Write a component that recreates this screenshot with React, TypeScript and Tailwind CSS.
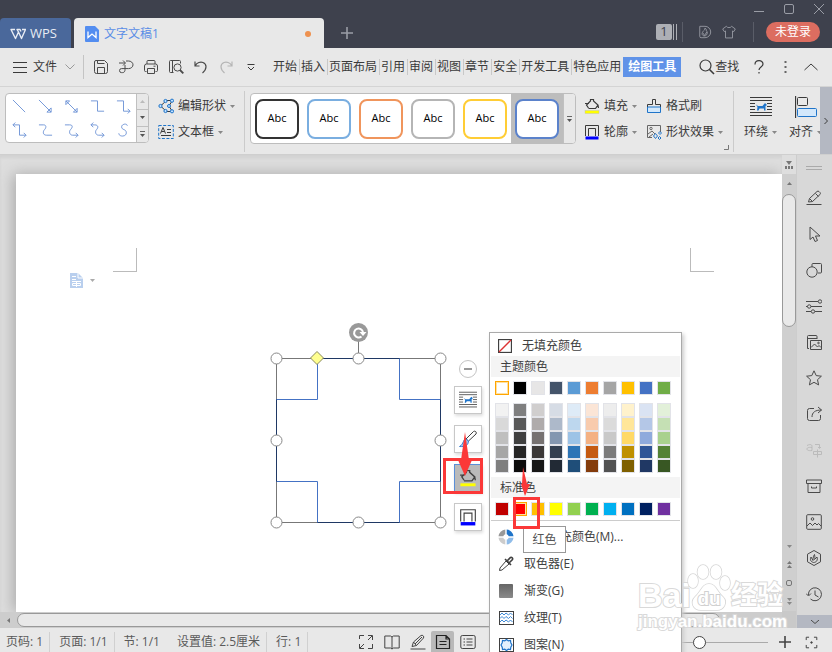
import type { ReactNode } from "react";
import clsx from "clsx";

type IconProps = { children: ReactNode; className?: string; box?: string };

function Icon({ children, className = "size-4", box = "0 0 16 16" }: IconProps) {
  return (
    <svg aria-hidden="true" viewBox={box} className={clsx("shrink-0", className)} fill="none" stroke="currentColor" strokeWidth="1">
      {children}
    </svg>
  );
}

function Caret({ className = "text-[#888]" }: { className?: string }) {
  return (
    <svg aria-hidden="true" viewBox="0 0 5 3" className={clsx("h-[3px] w-[5px] shrink-0", className)} fill="currentColor">
      <path d="M0 0h5L2.5 3z" />
    </svg>
  );
}

const quickActions = [
  { label: "保存", icon: <path d="M3 1.5h8.5l3 3v8a2 2 0 0 1-2 2h-9a2 2 0 0 1-2-2V3A1.5 1.5 0 0 1 3 1.5ZM4.5 1.5v3h7M4.5 14.500V8.500h7v6" /> },
  { label: "输出为PDF", icon: <path d="M1 4h6M5 1.500 7.500 4 5 6.500M8 2h2.500a4.500 3.800 0 0 1 0 7.600H3.500a1.900 1.900 0 0 0 0 4h1c2 0 2.500-1.500 2.500-3V6" /> },
  { label: "打印", icon: <path d="M4 5V2.500A1 1 0 0 1 5 1.500h6a1 1 0 0 1 1 1V5M3.500 12.500h-1a1 1 0 0 1-1-1V7a2 2 0 0 1 2-2h9a2 2 0 0 1 2 2v4.500a1 1 0 0 1-1 1h-1M4.500 9.500h7v5h-7zM10.500 7.200h2" /> },
  { label: "打印预览", icon: <><path d="M5.500 13.500H2.500a1 1 0 0 1-1-1v-10a1 1 0 0 1 1-1h9a1 1 0 0 1 1 1v2M4.500 1.500v12" /><circle cx="9.500" cy="8.500" r="3.600" /><path d="m12 11 3.300 3.300" strokeWidth="1.800" /></> },
  { label: "撤销", icon: <path d="M2 2.500v4.500h4.500M2.300 6.700C4 3.500 7.500 2.500 10 3.500c4 1.600 4.200 6.500-.5 10.500" strokeWidth="1.200" /> },
  { label: "恢复", dim: true, icon: <path d="M14 2.500v4.500H9.500M13.700 6.700C12 3.500 8.500 2.500 6 3.500c-4 1.600-4.200 6.500.5 10.500" strokeWidth="1.200" /> },
];

const menuTabs = ["开始", "插入", "页面布局", "引用", "审阅", "视图", "章节", "安全", "开发工具"];

const connectors = [
  "M1 1l13 13",
  "M1 1l13 13M14 9.500V14H9.500z",
  "M2 2l12 12M14 10v4h-4zM2 6V2h4z",
  "M1 2h7v11h7",
  "M1 2h7v11h7M12.500 10.500 15 13l-2.500 2.500",
  "M1 2h7v11h7M12.500 10.500 15 13l-2.500 2.500M3.500-.5 1 2l2.500 2.500",
  "M1 2h5c3 0 3 3 1 5s-2 6 2 6h6",
  "M1 2h5c4 0 3 3 1 5s-1 6 2 6h6M12.500 10.500 15 13l-2.500 2.500",
  "M1 2h4c4 0 4 3 2 5s-1 6 2 6h6M12.500 10.500 15 13l-2.500 2.500M3.500-.5 1 2l2.500 2.500",
  "M12 3c0-3-6-2-6 1 0 4 5 2 5 6.500 0 4.500-8 4.500-8 .5",
];

const outlineStyles = [
  { name: "黑色", box: "border-[#333]" },
  { name: "浅蓝", box: "border-[#7aaee0]" },
  { name: "橙色", box: "border-[#f0955c]" },
  { name: "灰色", box: "border-[#b5b5b5]" },
  { name: "金色", box: "border-[#ffcd35]" },
  { name: "蓝色", box: "border-[#5b82cb]", selected: true },
];

const themeColors = ["#ffffff", "#000000", "#e7e6e6", "#44546a", "#5b9bd5", "#ed7d31", "#a5a5a5", "#ffc000", "#4472c4", "#70ad47"];
const shades = [
  ["#f2f2f2", "#7f7f7f", "#d0cece", "#d6dce5", "#deebf7", "#fbe5d6", "#ededed", "#fff2cc", "#dae3f3", "#e2f0d9"],
  ["#d9d9d9", "#595959", "#afabab", "#adb9ca", "#bdd7ee", "#f8cbad", "#dbdbdb", "#ffe699", "#b4c7e7", "#c5e0b4"],
  ["#bfbfbf", "#404040", "#767171", "#8497b0", "#9dc3e6", "#f4b183", "#c9c9c9", "#ffd966", "#8faadc", "#a9d18e"],
  ["#a6a6a6", "#262626", "#3b3838", "#333f50", "#2e75b6", "#c55a11", "#7b7b7b", "#bf9000", "#2f5597", "#548235"],
  ["#7f7f7f", "#0d0d0d", "#171717", "#222a35", "#1f4e79", "#843c0c", "#525252", "#7f6000", "#203864", "#385723"],
];
const standardColors = ["#c00000", "#ff0000", "#ffc000", "#ffff00", "#92d050", "#00b050", "#00b0f0", "#0070c0", "#002060", "#7030a0"];

function Swatches({ colors, selected }: { colors: string[]; selected?: number }) {
  return (
    <div className="flex gap-1 px-[5px]">
      {colors.map((color, i) => (
        <button
          key={i}
          type="button"
          aria-label={color}
          className={clsx("size-[14px] border", i === selected ? "border-[#ffa500] shadow-[inset_0_0_0_1px_#ffe0a0]" : "border-[#e2e3e8]")}
          style={{ backgroundColor: color }}
        />
      ))}
    </div>
  );
}

function FillIcon({ className = "size-4" }: { className?: string }) {
  return (
    <Icon className={className}>
      <path d="M4.500 10 2.500 7 6.500 3V1.500h3V3L14 7l-2.500 3.500h-7M1 5.500h4M14 7l.5 3" strokeWidth="1.200" />
      <rect x="1" y="12.500" width="14" height="3" fill="#ff0" stroke="#bbb" strokeWidth=".4" />
    </Icon>
  );
}

function OutlineIcon({ className = "size-4" }: { className?: string }) {
  return (
    <Icon className={className}>
      <path d="M1.500 12V1.500h13V12M4.500 12V4.500h7V12" />
      <rect x="1.500" y="12.500" width="13" height="3" fill="#00f" stroke="none" />
    </Icon>
  );
}

function WrapIcon({ className }: { className: string }) {
  return (
    <Icon className={className} box="0 0 22 22">
      <path d="M0 1.500h22M0 4.500h22M0 7.500h5M17 7.500h5M0 10.500h5M17 10.500h5M0 13.500h5M17 13.500h5M0 16.500h22M0 19.500h22" />
      <path d="m6 8.500 2 1.500h4.500L15 7l2 2-1.500 1v4.500H14V12.500H9.500L8.500 14.500H7L7.500 11z" fill="#1f74c9" stroke="none" />
    </Icon>
  );
}

function TitleBar() {
  return (
    <header className="flex h-12 shrink-0 items-end bg-[#3e414d] text-[#9a9da6]">
      <button type="button" className="flex h-[30px] w-[71px] items-center gap-1 rounded-t bg-[#4a689b] pt-[2px] pl-[10px] text-[13px] text-[#e8ecf4]">
        <Icon className="h-3 w-4" box="0 0 16 12">
          <path d="M5 1.500H1l4.500 9 3-6.500L7 1.500h3l1 2M8.500 4l3 6.500 4-9H12" strokeWidth="1.400" strokeLinejoin="round" />
        </Icon>
        WPS
      </button>
      <div className="ml-[3px] flex h-[30px] w-[250px] items-center gap-[5px] rounded-t bg-[#e8e8e8] pt-[2px] pr-[13px] pl-[11px] text-[#5a8de6]">
        <svg aria-hidden="true" viewBox="0 0 14 16" className="h-4 w-[14px]">
          <path d="M1 0h9l4 4v11a1 1 0 0 1-1 1H1a1 1 0 0 1-1-1V1a1 1 0 0 1 1-1Z" fill="#538df0" />
          <path d="M3 5.500v6l4-3.500 4 3.500v-6" fill="none" stroke="#fff" strokeWidth="1.300" />
        </svg>
        <span className="grow">文字文稿1</span>
        <span className="size-[6px] rounded-full bg-[#ee914f]" />
      </div>
      <button type="button" aria-label="新建" className="flex h-[30px] w-[46px] items-center justify-center">
        <Icon className="size-3" box="0 0 12 12"><path d="M6 0v12M0 6h12" strokeWidth="1.600" /></Icon>
      </button>
      <div className="ml-auto flex flex-col items-end pb-[6px]">
        <div className="mb-1 flex h-[18px] items-center gap-5 pr-2">
          <button type="button" aria-label="最小化"><Icon className="size-[10px]" box="0 0 10 10"><path d="M0 7.500h10" /></Icon></button>
          <button type="button" aria-label="最大化"><Icon className="size-[10px]" box="0 0 10 10"><rect x=".5" y=".5" width="9" height="9" rx="1.500" /></Icon></button>
          <button type="button" aria-label="关闭"><Icon className="size-[10px]" box="0 0 10 10"><path d="m0 0 10 10M10 0 0 10" /></Icon></button>
        </div>
        <div className="flex h-5 items-center pr-3">
          <span className="flex size-4 items-center justify-center rounded-xs bg-[#adafb5] text-[13px] text-[#3e414d]">1</span>
          <span className="ml-px flex h-4 w-1 border-x border-[#adafb5]" />
          <span className="ml-[5px] h-5 w-px bg-[#5a5d68]" />
          <button type="button" aria-label="稻壳" className="ml-[15px]">
            <Icon className="size-[14px]"><path d="M2 1.500h6a6.500 6.500 0 0 1 0 13H3.500a1.500 1.500 0 0 1-1.500-1.500zM8 3.500c3 2 0 3 2.500 4 .5 3-1 5-3 5-3 0-4-3-1-6 1.500-1 1-2 1.500-3ZM5.500 9l2 3 2.500-4" /></Icon>
          </button>
          <button type="button" aria-label="皮肤" className="ml-[10px]">
            <Icon className="size-[14px]"><path d="m5 1.500-4.200 3 1.700 3 1.500-.7v8h8v-8l1.500.7 1.700-3-4.200-3c-1 2-5 2-6 0Z" /></Icon>
          </button>
          <span className="ml-[17px] h-5 w-px bg-[#5a5d68]" />
          <button type="button" className="ml-3 h-5 w-[54px] rounded-full bg-[#dc6d60] text-white">未登录</button>
        </div>
      </div>
    </header>
  );
}

function MenuBar() {
  return (
    <nav className="flex h-[39px] shrink-0 items-center border-b border-[#d4d4d4] text-[#3a3a3a]">
      <button type="button" className="flex items-center gap-[6px] pl-[13px]">
        <Icon className="h-[11px] w-[14px]" box="0 0 14 11"><path d="M0 .5h14M0 5.500h14M0 10.500h14" /></Icon>
        文件
        <Icon className="ml-[2px] h-[6px] w-[10px] text-[#999]" box="0 0 10 6"><path d="m.5.5 4.500 4.500L9.500.5" /></Icon>
      </button>
      <span className="mr-1 ml-2 h-6 w-px bg-[#c4c4c4]" />
      {quickActions.map((a) => (
        <button key={a.label} type="button" aria-label={a.label} className={clsx("flex w-[25px] justify-center", a.dim ? "text-[#b5b5b5]" : "text-[#4a4a4a]")}>
          <Icon>{a.icon}</Icon>
        </button>
      ))}
      <button type="button" aria-label="自定义" className="flex w-[25px] justify-center">
        <Icon className="h-[7px] w-2" box="0 0 8 7"><path d="M.5.5h7M1 3l3 3 3-3" /></Icon>
      </button>
      <div className="ml-[9px] flex items-center">
        {menuTabs.map((tab) => (
          <button key={tab} type="button" className="border-r border-[#c8c8c8] pr-[2px] pl-px whitespace-nowrap">{tab}</button>
        ))}
        <button type="button" className="pr-[2px] pl-px whitespace-nowrap">特色应用</button>
        <button type="button" className="h-5 w-[58px] bg-[#6093e8] font-bold whitespace-nowrap text-white">绘图工具</button>
      </div>
      <button type="button" className="ml-[18px] flex items-center whitespace-nowrap">
        <Icon><circle cx="6.500" cy="6.500" r="5.500" strokeWidth="1.200" /><path d="m10.500 10.500 4.500 4.500" strokeWidth="1.600" /></Icon>
        查找
      </button>
      <div className="ml-auto flex items-center pr-[14px]">
        <button type="button" aria-label="帮助"><Icon className="h-[14px] w-[10px]" box="0 0 10 14"><path d="M1 4.500c0-5 8-5 8-.5 0 3-4 3-4 6M5 12v1.500" strokeWidth="1.200" /></Icon></button>
        <button type="button" aria-label="更多" className="ml-5"><Icon className="h-3 w-[3px] text-[#666]" box="0 0 3 12"><path d="M1.500 0v2M1.500 5v2M1.500 10v2" strokeWidth="2" /></Icon></button>
        <button type="button" aria-label="收起功能区" className="ml-[17px]"><Icon className="h-2 w-[14px]" box="0 0 14 8"><path d="m.5 7 6.500-6 6.500 6" /></Icon></button>
      </div>
    </nav>
  );
}

function GalleryScroll({ full }: { full?: boolean }) {
  return (
    <div className="flex w-3 shrink-0 flex-col divide-y divide-[#c0c0c0] border-l border-[#c0c0c0] bg-[#e8e8e8]">
      {full && <button type="button" aria-label="上一行" className="flex flex-1 items-center justify-center"><Caret className="rotate-180 text-[#bbb]" /></button>}
      {full && <button type="button" aria-label="下一行" className="flex flex-1 items-center justify-center"><Caret className="text-[#555]" /></button>}
      <button type="button" aria-label="展开" className="flex flex-1 flex-col items-center justify-center gap-[2px]">
        <span className="h-px w-[5px] bg-[#666]" />
        <Caret className="text-[#555]" />
      </button>
    </div>
  );
}

function ToolButton({ icon, label, caret = true }: { icon: ReactNode; label: string; caret?: boolean }) {
  return (
    <button type="button" className="flex h-[26px] items-center gap-1 whitespace-nowrap">
      {icon}
      {label}
      {caret && <Caret />}
    </button>
  );
}

function Ribbon() {
  return (
    <section className="flex h-[68px] shrink-0 overflow-hidden border-b border-[#cfcfcf] text-[#3a3a3a]">
      <div className="mt-[6px] ml-[5px] flex h-[50px] w-[144px] shrink-0 overflow-hidden rounded border border-[#bdbdbd] bg-white">
        <div className="grid grow grid-cols-5 place-items-center text-[#6f94d6]">
          {connectors.map((d, i) => (
            <button key={i} type="button" aria-label={`连接符 ${i + 1}`}><Icon className="size-[15px] overflow-visible"><path d={d} /></Icon></button>
          ))}
        </div>
        <GalleryScroll full />
      </div>
      <div className="mt-[6px] ml-[9px] shrink-0">
        <ToolButton
          label="编辑形状"
          icon={
            <Icon className="size-4">
              <path d="m2.500 8 6-5.500H14M2.500 8l6 5.500H14M14 3l-3 5 3 5" />
              <g stroke="#1f74c9" fill="#bfe0ff">
                <circle cx="2.500" cy="8" r="1.600" /><circle cx="7.500" cy="3" r="1.600" /><circle cx="7.500" cy="13" r="1.600" /><circle cx="14" cy="2.700" r="1.600" /><circle cx="14" cy="13.300" r="1.600" /><circle cx="11" cy="8" r="1.500" />
              </g>
            </Icon>
          }
        />
        <ToolButton
          label="文本框"
          icon={
            <Icon className="size-4">
              <rect x=".7" y="1.500" width="14.600" height="13" stroke="#1f74c9" strokeDasharray="3 1.500" />
              <path d="m2.500 9.500 2.500-6 2.500 6M3.500 7.500h3M9 5.500h4M9 8.500h4M3 11.500h10" />
            </Icon>
          }
        />
      </div>
      <span className="mt-1 ml-[9px] h-[61px] w-px shrink-0 bg-[#cbcbcb]" />
      <div className="mt-[6px] ml-[5px] flex h-[51px] w-[326px] shrink-0 overflow-hidden rounded border border-[#bdbdbd] bg-white">
        <div className="flex grow">
          {outlineStyles.map((s) => (
            <button key={s.name} type="button" aria-label={s.name} className={clsx("flex w-[52px] items-center justify-center", s.selected && "bg-[#bdbdbd]")}>
              <span className={clsx("flex h-10 w-11 items-center justify-center rounded-lg border-2 bg-white text-[11px] text-black", s.box)}>Abc</span>
            </button>
          ))}
        </div>
        <GalleryScroll />
      </div>
      <div className="mt-[6px] ml-2 shrink-0">
        <ToolButton label="填充" icon={<FillIcon />} />
        <ToolButton label="轮廓" icon={<OutlineIcon />} />
      </div>
      <div className="mt-[6px] ml-[9px] shrink-0">
        <ToolButton
          label="格式刷"
          caret={false}
          icon={
            <Icon>
              <path d="M1.500 9V6.500h5v-5h3v5h5V9" />
              <path d="M1.500 9h13v5.500h-13z" fill="#d3e8fb" stroke="#1f74c9" />
            </Icon>
          }
        />
        <ToolButton
          label="形状效果"
          icon={
            <Icon>
              <path d="M6 13.500H1.500v-12h13V8M2 10l4-3 3 3M3 13l4-3" stroke="#666" />
              <circle cx="5" cy="4.500" r="1.200" stroke="#666" />
              <path d="m9.500 9.500 2 2.500-2 2.500-2-2.500zM14 7.500 15.500 9 14 10.500 12.500 9zM13.500 12.500l1.500 1.500-1.500 1.500L12 14z" stroke="#1f74c9" />
            </Icon>
          }
        />
      </div>
      <div className="flex shrink-0 items-end pb-1">
        <Icon className="mt-auto ml-px size-[5px] text-[#777]" box="0 0 5 5"><path d="M4.500 0v4.500H0" /></Icon>
      </div>
      <span className="mt-1 ml-1 h-[61px] w-px shrink-0 bg-[#cbcbcb]" />
      <div className="flex grow gap-3 overflow-hidden pt-[9px] pl-[10px]">
        <button type="button" className="flex shrink-0 flex-col items-center gap-[6px]">
          <WrapIcon className="size-[22px]" />
          <span className="flex items-center gap-1">环绕<Caret /></span>
        </button>
        <button type="button" className="flex shrink-0 flex-col items-center gap-[6px]">
          <Icon className="size-[22px]" box="0 0 22 22">
            <path d="M.5 0v22" strokeWidth="1.300" />
            <rect x="2.500" y="1.500" width="10" height="8" rx="1" />
            <rect x="2.500" y="12.500" width="19" height="8" rx="1" fill="#d3e8fb" stroke="#1f74c9" />
          </Icon>
          <span className="flex items-center gap-1">对齐<Caret /></span>
        </button>
      </div>
      <button type="button" aria-label="向右滚动" className="flex w-3 shrink-0 items-center justify-center bg-[#b4b8c2]">
        <Icon className="h-2 w-1" box="0 0 4 8"><path d="m.5 1 3 3-3 3" /></Icon>
      </button>
    </section>
  );
}

// the plus shape with its selection frame, drawn on the free canvas
function SelectedShape() {
  const stops = [6.5, 88.5, 170.5];
  return (
    <svg aria-label="十字形" viewBox="0 0 177 207" className="absolute top-[167px] left-[270px] h-[207px] w-[177px]" fill="none">
      <path d="M6.500 36.500h164v164H6.500zM88.500 10v26" stroke="#777" />
      <path d="M47.500 36.500h82v41h41v82h-41v41h-82v-41h-41v-82h41z" stroke="#4472c4" />
      <path d="M47.500 36.500h82M47.500 200.500h82M6.500 77.500v82M170.500 77.500v82" stroke="#1f3864" />
      {stops.map((x) =>
        stops.map((y) => (x === 88.5 && y === 88.5 ? null : <circle key={`${x}-${y}`} cx={x} cy={y + 30} r="5.500" fill="#fff" stroke="#888" />)),
      )}
      <path d="m47 29.500 6.500 6.500-6.500 6.500-6.500-6.500z" fill="#ffff8f" stroke="#8a8a60" />
      <circle cx="88.500" cy="10.500" r="9.500" fill="#999" />
      <path d="M91.500 14.500a4.500 4.500 0 1 1 1.500-4.500" stroke="#fff" strokeWidth="2" />
      <path d="M89.500 10h7l-3.500 4z" fill="#fff" />
    </svg>
  );
}

function FloatingTools() {
  const box = "flex size-7 items-center justify-center border shadow-[1px_2px_3px_#ddd]";
  return (
    <div className="absolute top-[205px] left-[454px] flex flex-col items-center gap-[11px]">
      <button type="button" aria-label="收起" className="-mb-[3px] flex size-[18px] items-center justify-center rounded-full border border-[#c4c4c4] bg-white">
        <span className="h-[2px] w-2 bg-[#999]" />
      </button>
      <button type="button" aria-label="布局选项" className={clsx(box, "border-[#c8c8c8] bg-white")}><WrapIcon className="size-[18px]" /></button>
      <button type="button" aria-label="形状样式" className={clsx(box, "border-[#c8c8c8] bg-white")}>
        <Icon className="size-[18px]" box="0 0 18 18"><path d="m7 9 7.500-7.500a1.800 1.800 0 0 1 2.500 2.500L9.500 11z" /><path d="M7 9c-3 0-2 5-6.500 7.500 5 .5 9-1 9-5.500z" fill="#9cc3f0" stroke="#3b7fd0" /></Icon>
      </button>
      <button type="button" aria-label="形状填充" className={clsx(box, "border-[#5b8fd8] bg-[#bababa]")}><FillIcon className="size-[18px]" /></button>
      <button type="button" aria-label="形状轮廓" className={clsx(box, "border-[#c8c8c8] bg-white")}><OutlineIcon className="size-[18px]" /></button>
    </div>
  );
}

function Canvas() {
  return (
    <main className="relative grow overflow-hidden bg-[#dedede] pt-[19px] pl-4 shadow-[inset_0_3px_3px_#d2d2d2]">
      <div className="h-full bg-white shadow-[-3px_0_14px_#aaa]" />
      <span className="absolute top-[93px] left-[113px] size-6 border-r border-b border-[#bbb]" />
      <span className="absolute top-[93px] left-[690px] size-6 border-b border-l border-[#bbb]" />
      <button type="button" aria-label="粘贴选项" className="absolute top-[118px] left-[70px] flex items-center gap-[7px]">
        <svg aria-hidden="true" viewBox="0 0 13 15" className="h-[15px] w-[13px]">
          <path d="M0 0h8l5 5v10H0z" fill="#b9cfee" />
          <path d="M8 0v5h5M2 3.500h4M2 6.500h4M2 8.500h9M2.500 10.500h8v2h-8zM6.500 9v5" fill="none" stroke="#fff" />
        </svg>
        <Caret className="text-[#aaa]" />
      </button>
      <SelectedShape />
      <FloatingTools />
    </main>
  );
}

function VerticalScroll() {
  return (
    <div className="flex w-[14px] shrink-0 flex-col items-center bg-[#cfcfcf] text-[#777]">
      <button type="button" aria-label="标尺" className="flex h-[19px] w-full items-center justify-center bg-[#dedede]">
        <Icon className="size-2" box="0 0 8 8"><path d="M1 0h6L4 4zM0 5h2v3H0zM3 5h2v3H3zM6 5h2v3H6z" fill="currentColor" stroke="none" /></Icon>
      </button>
      <button type="button" aria-label="向上滚动" className="flex h-5 items-center pb-[2px]"><Caret className="rotate-180" /></button>
      <div className="h-[133px] w-[14px] rounded-full border border-[#999] bg-[#e9e9e9]" />
      <div className="mt-auto flex flex-col items-center">
        <button type="button" aria-label="向下滚动" className="flex h-[18px] items-center"><Caret /></button>
        <button type="button" aria-label="上一页" className="flex h-[18px] flex-col items-center justify-center gap-px"><Caret className="rotate-180" /><Caret className="rotate-180" /></button>
        <button type="button" aria-label="选择浏览对象" className="flex h-[19px] items-center"><span className="size-[6px] rounded-xs border border-[#777]" /></button>
        <button type="button" aria-label="下一页" className="flex h-[19px] flex-col items-center justify-center gap-px"><Caret /><Caret /></button>
      </div>
      <span className="h-[17px] w-full shrink-0 bg-[#c9c9c9]" />
    </div>
  );
}

const sideTools = [
  { label: "书写", icon: <path d="M.5 14.500h15M2.500 12 3.500 8.500 11 1.500a1.500 1.500 0 0 1 2 0l1 1a1.500 1.500 0 0 1 0 2L6.500 11.500zM9.500 3.500l3 3M3.500 8.500l3 3" /> },
  { label: "选择", icon: <path d="M4 1v12.500l3-2.500 2 4.500 2.500-1-2-4.500h4.500z" /> },
  { label: "形状", icon: <><path d="M6 5V2.500A1 1 0 0 1 7 1.500h7.500a1 1 0 0 1 1 1V10a1 1 0 0 1-1 1H12" /><circle cx="6" cy="10" r="5.200" /></> },
  { label: "属性", icon: <><path d="M0 3.500h12M0 8.500h1.500M5 8.500h11M0 13.500h5M9 13.500h7" /><circle cx="14" cy="3.500" r="1.700" /><circle cx="3.200" cy="8.500" r="1.700" /><circle cx="7" cy="13.500" r="1.700" /></> },
  { label: "图库", icon: <><path d="M3 14.500H1.500v-12a1 1 0 0 1 1-1H10a1 1 0 0 1 1 1V5M1.500 4.500H11M4.500 6.500h11v9h-11zM5 13.500l3.500-3.500 3 3 1.500-1.500 2 2" /><circle cx="12.500" cy="9" r=".8" /></> },
  { label: "收藏", icon: <path d="m8 .8 2.200 4.800 5.200.6-3.900 3.500 1.100 5.200L8 12.300l-4.600 2.600 1.100-5.200L.6 6.200l5.200-.6z" /> },
  { label: "分享", icon: <path d="M8 2.500H3.500a2 2 0 0 0-2 2v8a2 2 0 0 0 2 2h9a2 2 0 0 0 2-2V9M12 1l3.500 3L12 7M15.500 4C9 4 6 6.500 6 11" /> },
  { label: "翻译", dim: true, icon: <path d="M1 3.500c4-2 5-.5 5 1v4C2 9 1 8 1 7s1-2 5-1.500M9 2.500h4.500V6M12 5l1.500 1.500L15 5M7.500 9.500h8v3h-8zM11.500 7.500v8" /> },
  { label: "归档", icon: <path d="M.5 2h15v3.500H.5zM2 5.500h12v9H2zM5.500 8.500V10h5V8.500" /> },
  { label: "图片", icon: <><rect x=".7" y=".7" width="14.600" height="14.600" rx="1" /><circle cx="6.500" cy="5" r="1.300" /><path d="m1 12 3-3 2.500 2.500L9 9l2 2 1.500-1.500L15 12" /></> },
  { label: "素材", icon: <path d="m8 .5 6.500 3.700v7.600L8 15.500l-6.500-3.700V4.200zM7.500 12.500C4 11.500 4 9 5 7l2 3.500c0-3 .5-5 1.500-6C9 7 9 8 8.500 9.500L11 7c1 3-.5 5.500-3.500 5.500Z" /> },
  { label: "历史", icon: <path d="M2.500 9a6.500 6.500 0 1 1 2 4M0 7.500 2.500 10 5 7.500M9 4.500V9l3.500 2" /> },
];

function SidePanel() {
  return (
    <aside className="flex w-9 shrink-0 flex-col items-center border-l border-[#cdcdcd] bg-[#d8d8d8] pr-[2px] text-[#4a4a4a]">
      <span className="mt-[11px] mb-[10px] h-1 w-4 shrink-0 border-y border-[#aaa]" />
      {sideTools.map((t) => (
        <button key={t.label} type="button" aria-label={t.label} className={clsx("flex h-9 w-full shrink-0 items-center justify-center", t.dim && "text-[#bbb]")}>
          <Icon>{t.icon}</Icon>
        </button>
      ))}
      <button type="button" aria-label="更多工具" className="mt-auto -mr-[2px] flex h-[13px] items-center justify-center self-stretch bg-[#b4b8c2]">
        <Icon className="h-1 w-2" box="0 0 8 4"><path d="m0 0 4 3.500L8 0" /></Icon>
      </button>
    </aside>
  );
}

function StatusBar() {
  const cell = "border-r border-[#d0d0d0] pr-[6px] leading-5";
  return (
    <footer className="flex h-6 shrink-0 items-center pt-1 whitespace-nowrap text-[#5a5a5a]">
      <span className={clsx(cell, "pl-[6px]")}>页码: 1</span>
      <span className={clsx(cell, "pl-[9px]")}>页面: 1/1</span>
      <span className="pl-[9px]">节: 1/1</span>
      <span className={clsx(cell, "pl-[17px]")}>设置值: 2.5厘米</span>
      <span className={clsx(cell, "pl-[9px]")}>行: 1</span>
      <div className="ml-[45px] flex items-center text-[#444]">
        <button type="button" aria-label="全屏" className="flex w-[26px] justify-center"><Icon><path d="M6 1.500H1.500V5M10 1.500h4.500V6M6 14.500H1.500V10M10 14.500h4.500V10M14 2l-4 4M2 14l4-4" /></Icon></button>
        <button type="button" aria-label="阅读版式" className="flex w-[26px] justify-center"><Icon><path d="M.8 2h5.700L8 3l1.500-1h5.700v12H9.500L8 15l-1.500-1H.8zM8 3v12" /></Icon></button>
        <button type="button" aria-label="写作模式" className="flex w-[26px] justify-center"><Icon><path d="M.5 15h15M2 12.500 3.500 8 11 1.500c1.500-1 3.500 1 2.500 2.500L6.500 11.500zM3.500 8l3 3.500M5 10l7-7" /></Icon></button>
        <button type="button" aria-label="页面视图" className="flex h-[22px] w-[23px] items-center justify-center rounded-t-xs bg-[#b9b9b9] text-[#222]"><Icon><path d="M2.500 1.500H11l3.500 3.500v9.500h-13v-13zM11 1.500V5h3.500M4.500 7.500h7M4.500 10.500h7" strokeWidth="1.200" /></Icon></button>
        <button type="button" aria-label="大纲" className="flex w-7 justify-center"><Icon><rect x=".8" y="1.500" width="14.400" height="13" rx="1.500" /><path d="M3.500 5h1.500M6.500 5h6M3.500 8h1.500M6.500 8h6M3.500 11h1.500M6.500 11h6" /></Icon></button>
      </div>
      <div className="ml-auto flex items-center pr-[14px] text-[#444]">
        <input
          type="range"
          aria-label="缩放"
          defaultValue="46"
          className="h-4 w-32 appearance-none bg-transparent [&::-webkit-slider-runnable-track]:h-px [&::-webkit-slider-runnable-track]:bg-[#aaa] [&::-webkit-slider-thumb]:-mt-[6px] [&::-webkit-slider-thumb]:size-[13px] [&::-webkit-slider-thumb]:appearance-none [&::-webkit-slider-thumb]:rounded-full [&::-webkit-slider-thumb]:border [&::-webkit-slider-thumb]:border-[#444] [&::-webkit-slider-thumb]:bg-white"
        />
        <button type="button" aria-label="放大" className="ml-[11px]"><Icon className="size-3" box="0 0 12 12"><path d="M6 0v12M0 6h12" strokeWidth="1.600" /></Icon></button>
        <button type="button" aria-label="适应页面" className="ml-[14px]"><Icon className="size-[13px]"><path d="M5 1.500H1.500V5M11 1.500h3.500V5M5 14.500H1.500V11M11 14.500h3.500V11" strokeWidth="1.200" /><circle cx="8" cy="8" r="1" fill="currentColor" /></Icon></button>
      </div>
    </footer>
  );
}

const menuItems = [
  {
    label: "其他填充颜色(M)...",
    icon: (
      <g stroke="none">
        <path d="M7.300.5v4.800a2.700 2.700 0 0 0-2 2H.5a7.500 7.500 0 0 1 6.800-6.800Z" fill="#999" />
        <path d="M8.700.5v4.800a2.700 2.700 0 0 1 2 2h4.800A7.500 7.500 0 0 0 8.700.5Z" fill="#1f74c9" />
        <path d="M8.700 15.500v-4.800a2.700 2.700 0 0 0 2-2h4.800a7.500 7.500 0 0 1-6.800 6.800Z" fill="#8fbce9" />
        <path d="M7.300 15.500v-4.800a2.700 2.700 0 0 1-2-2H.5a7.500 7.500 0 0 0 6.800 6.800Z" fill="#ccc" />
      </g>
    ),
  },
  { label: "取色器(E)", icon: <><path d="m8 5 3 3-7 6-2.500.5.500-2.500z" /><path d="m7 3 6 6M9 5l3.500-3.500a1.500 1.500 0 0 1 2 2L11 7" strokeWidth="1.600" /></> },
  { label: "渐变(G)", icon: <><defs><linearGradient id="gray" x2="0" y2="1"><stop stopColor="#666" /><stop offset="1" stopColor="#8a8a8a" /></linearGradient></defs><rect x="1" y="1" width="14" height="14" rx="1" fill="url(#gray)" stroke="none" /></> },
  { label: "纹理(T)", icon: <><rect x="1.500" y="1.500" width="14" height="13" /><path d="m2 5 2-2 2 2 2-2 2.500 2 2-2 2 2M2 8.500l2-2 2 2 2-2 2.500 2 2-2 2 2M2 12l2-2 2 2 2-2 2.500 2 2-2 2 2" stroke="#3f8ad6" /></> },
  { label: "图案(N)", icon: <><rect x="1.500" y="1.500" width="14" height="13" /><path d="m8.500 2.500 1.800 1.300 2.200-.3.300 2.200L14 8l-1.200 2.300-.3 2.200-2.200-.3-1.800 1.300-1.800-1.300-2.200.3-.3-2.200L3 8l1.200-2.300.3-2.200 2.200.3z" fill="#e4f1fd" stroke="#1f74c9" strokeWidth="1.200" /></> },
];

function FillMenu() {
  const heading = "mx-px h-[21px] bg-[#f4f4f4] pl-[9px] leading-[22px]";
  return (
    <div className="absolute top-[332px] left-[489px] w-[193px] border border-[#aaa] bg-white shadow-[2px_2px_4px_#ccc]">
      <button type="button" className="flex h-[23px] w-full items-center gap-[10px] pt-[2px] pl-2">
        <Icon className="size-[14px]" box="0 0 14 14"><rect x=".5" y=".5" width="13" height="13" strokeWidth="1.300" /><path d="M1 13 13 1" stroke="#d33" strokeWidth="1.300" /></Icon>
        无填充颜色
      </button>
      <h2 className={heading}>主题颜色</h2>
      <div className="pt-1 pb-2"><Swatches colors={themeColors} selected={0} /></div>
      {shades.map((row, i) => <Swatches key={i} colors={row} />)}
      <h2 className={clsx("mt-1", heading)}>标准色</h2>
      <div className="mx-px border-b border-[#ccc] py-1"><div className="-mx-px"><Swatches colors={standardColors} selected={1} /></div></div>
      <div className="pt-[2px]">
        {menuItems.map((item) => (
          <button key={item.label} type="button" className="flex h-[27px] w-full items-center gap-[10px] pl-2 whitespace-nowrap">
            <Icon>{item.icon}</Icon>
            {item.label}
          </button>
        ))}
      </div>
    </div>
  );
}

function Callouts() {
  return (
    <div className="pointer-events-none">
      <span role="tooltip" className="absolute top-[526px] left-[523px] w-[43px] border border-[#999] bg-white text-center leading-[25px] text-[#555]">红色</span>
      <span className="absolute top-[458px] left-[443px] h-9 w-10 border-3 border-[#fb3838]" />
      <span className="absolute top-[497px] left-[513px] h-8 w-[27px] border-3 border-[#fb3838]" />
      <svg aria-hidden="true" viewBox="0 0 14 44" className="absolute top-[432px] left-[458px] h-11 w-[14px]"><path d="M7 0 11 28h3L7 44 0 28h3z" fill="#fb3838" /></svg>
      <svg aria-hidden="true" viewBox="0 0 10 29" className="absolute top-[467px] left-[520px] h-[29px] w-[10px]"><path d="m3 0 4 17h3L5 29 1 17h1z" fill="#fb3838" /></svg>
    </div>
  );
}

function Watermark() {
  return (
    <div className="pointer-events-none absolute top-[562px] left-[638px] font-['Liberation_Sans','Noto_Sans_CJK_SC',sans-serif] font-bold whitespace-nowrap text-white [paint-order:stroke_fill] [-webkit-text-stroke:2px_#d9d9d9]">
      <div className="flex h-[50px] items-end">
        <span className="text-[34px] leading-[34px]">Bai</span>
        <svg aria-hidden="true" viewBox="0 0 44 48" className="-ml-1 h-12 w-11 shrink-0" fill="#fff" stroke="#d6d6d6" strokeWidth="1.500">
          <ellipse cx="6" cy="17" rx="5" ry="7" /><ellipse cx="16" cy="8" rx="5.500" ry="7" /><ellipse cx="29" cy="8" rx="5.500" ry="7" /><ellipse cx="38" cy="19" rx="5" ry="7" />
          <path d="M22 20c7 0 8 8 14 13 5 5 1 13-6 13H14C6 46 3 38 8 33c6-5 7-13 14-13Z" />
          <text x="22" y="41" textAnchor="middle" fontSize="19" stroke="#d0d0d0" strokeWidth="2">du</text>
        </svg>
        <span className="text-[26px] leading-[34px]">经验</span>
      </div>
      <div className="text-[17px] leading-5">jingyan.baidu.com</div>
    </div>
  );
}

export default function App() {
  return (
    <div className="relative flex h-screen flex-col overflow-hidden bg-[#e8e8e8] font-['Open_Sans','Noto_Sans_CJK_SC',sans-serif] text-xs text-[#404040]">
      <TitleBar />
      <MenuBar />
      <Ribbon />
      <div className="flex min-h-0 grow">
        <div className="flex min-w-0 grow flex-col">
          <Canvas />
          <div className="flex h-4 shrink-0 items-center bg-[#cdcdcd] text-[#777]">
            <button type="button" aria-label="向左滚动" className="flex w-[17px] justify-center"><Caret className="rotate-90" /></button>
            <div className="h-[14px] w-[703px] rounded-full border border-[#999] bg-[#e9e9e9]" />
            <button type="button" aria-label="向右滚动" className="ml-auto flex w-[17px] justify-center"><Caret className="-rotate-90" /></button>
          </div>
        </div>
        <VerticalScroll />
        <SidePanel />
      </div>
      <StatusBar />
      <FillMenu />
      <Callouts />
      <Watermark />
    </div>
  );
}
